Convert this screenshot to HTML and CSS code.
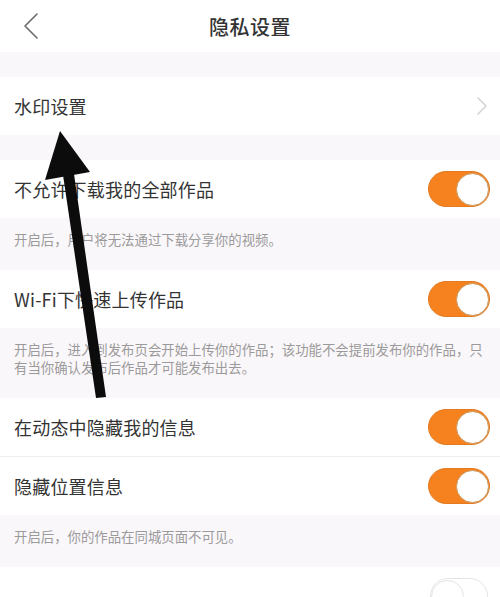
FILE: index.html
```html
<!DOCTYPE html>
<html lang="zh-CN">
<head>
<meta charset="utf-8">
<title>隐私设置</title>
<link rel="stylesheet" href="styles.css">
</head>
<body>
<div class="screen">
  <header class="nav">
    <svg class="back" width="20" height="28" viewBox="0 0 20 28"><polyline points="14,2 2,14 14,26" fill="none" stroke="#6a6a6a" stroke-width="1.6" stroke-linecap="round" stroke-linejoin="round"/></svg>
    <h1 class="title">隐私设置</h1>
  </header>
  <div class="gap"></div>
  <div class="row">
    <span class="label">水印设置</span>
    <svg class="chev" width="10" height="18" viewBox="0 0 10 18"><polyline points="1,1 9,9 1,17" fill="none" stroke="#cfcfcf" stroke-width="1.4" stroke-linecap="round" stroke-linejoin="round"/></svg>
  </div>
  <div class="gap"></div>
  <div class="row">
    <span class="label">不允许下载我的全部作品</span>
    <span class="switch on"><span class="knob"></span></span>
  </div>
  <p class="desc">开启后，用户将无法通过下载分享你的视频。</p>
  <div class="row">
    <span class="label">Wi-Fi下快速上传作品</span>
    <span class="switch on"><span class="knob"></span></span>
  </div>
  <p class="desc">开启后，进入到发布页会开始上传你的作品；该功能不会提前发布你的作品，只有当你确认发布后作品才可能发布出去。</p>
  <div class="row sep">
    <span class="label">在动态中隐藏我的信息</span>
    <span class="switch on"><span class="knob"></span></span>
  </div>
  <div class="row">
    <span class="label">隐藏位置信息</span>
    <span class="switch on"><span class="knob"></span></span>
  </div>
  <p class="desc">开启后，你的作品在同城页面不可见。</p>
  <div class="row end">
    <span class="switch off"><span class="knob"></span></span>
  </div>

  <svg class="arrow" width="500" height="597" viewBox="0 0 500 597">
    <polygon points="60,131 45,180 90,172" fill="#0c0c0c"/>
    <polygon points="63,175 74,174 106,397 96,398" fill="#0c0c0c"/>
  </svg>
</div>
</body>
</html>
```

FILE: styles.css
```css
html, body {
  margin: 0;
  padding: 0;
  background: #ffffff;
}

.screen {
  position: relative;
  width: 500px;
  height: 597px;
  overflow: hidden;
  background: #ffffff;
  font-family: "Noto Sans CJK SC", "Noto Sans", sans-serif;
  color: #333333;
}

.nav {
  height: 52px;
  display: flex;
  align-items: center;
  justify-content: center;
  position: relative;
  background: #ffffff;
}

.back {
  position: absolute;
  left: 23px;
  top: 12px;
}

.title {
  margin: 0;
  font-size: 20px;
  font-weight: 500;
  color: #333333;
  letter-spacing: 0.5px;
}

.gap {
  height: 25px;
  background: #faf7fa;
}

.row {
  height: 58px;
  display: flex;
  align-items: center;
  justify-content: space-between;
  padding: 0 10px 0 14px;
  background: #ffffff;
}

.row.sep {
  height: 59px;
  box-sizing: border-box;
  border-bottom: 1px solid #f0edf0;
}

.row.end {
  justify-content: flex-end;
  padding-right: 12px;
}

.label {
  font-size: 18px;
  color: #333333;
  letter-spacing: 0.2px;
}

.chev {
  margin-right: 3px;
}

.desc {
  margin: 0;
  padding: 12px 10px 22px 14px;
  background: #faf7fa;
  font-size: 13.4px;
  line-height: 18px;
  color: #9a9a9a;
}

.switch {
  position: relative;
  width: 62px;
  height: 36px;
  box-sizing: border-box;
  border-radius: 18px;
}

.switch.on {
  background: #f5821e;
  border: 1px solid #e47a22;
}

.switch.off {
  width: 58px;
  background: #ffffff;
  border: 1.5px solid #e4e4e4;
}

.knob {
  position: absolute;
  top: 0.5px;
  width: 33px;
  height: 33px;
  box-sizing: border-box;
  border-radius: 50%;
  background: #ffffff;
}

.switch.on .knob {
  right: 0;
  border: 1.5px solid #c89a62;
}

.switch.off .knob {
  left: 0;
  border: 1px solid #e4e4e4;
}

.arrow {
  position: absolute;
  left: 0;
  top: 0;
  pointer-events: none;
}
```
